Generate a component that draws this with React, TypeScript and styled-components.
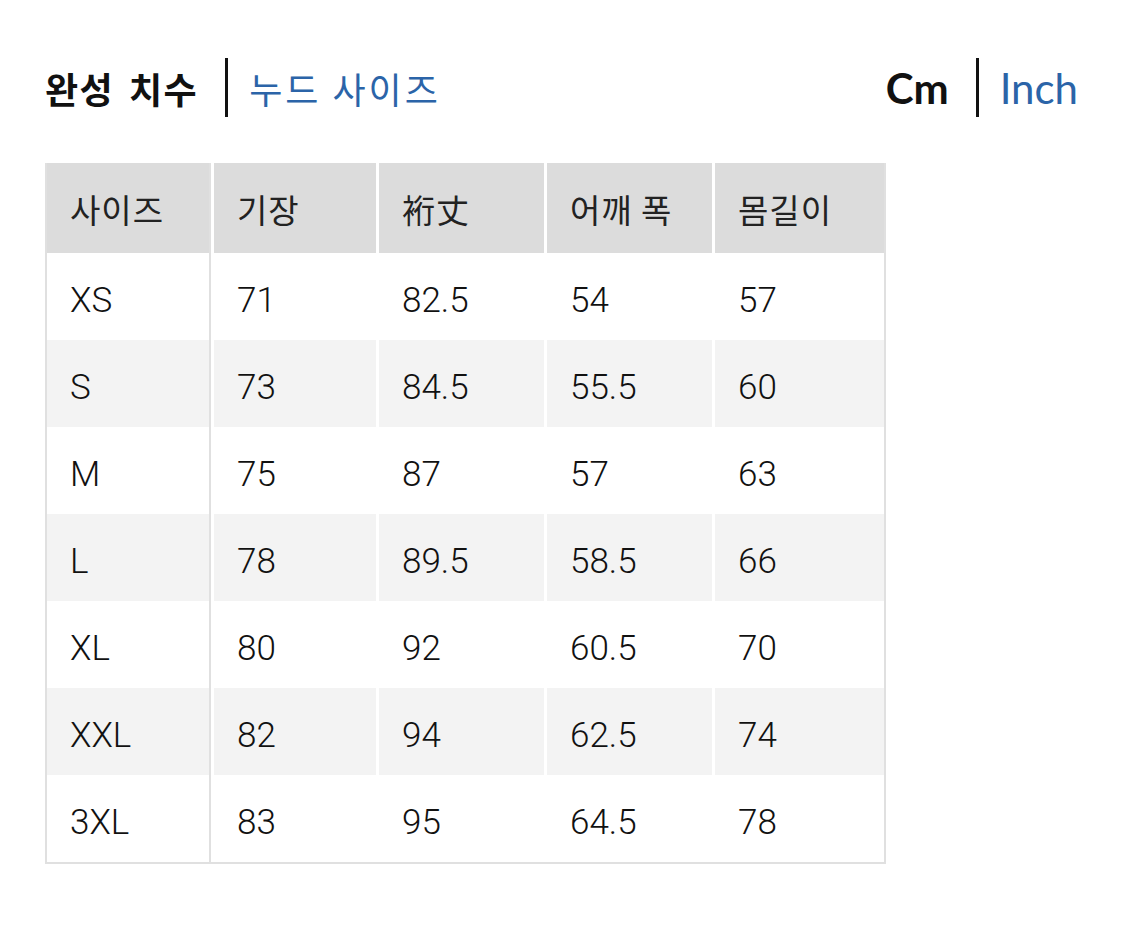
import React, { FC } from 'react';
import styled, { createGlobalStyle } from 'styled-components';

const GlobalStyle = createGlobalStyle`
    body {
        margin: 0;
        background: #fff;
        font-family: Roboto, "Noto Sans CJK KR", sans-serif;
        color: #111;
    }
`;

const Page = styled.div`
    width: 1125px;
    height: 945px;
    box-sizing: border-box;
    padding: 58px 47px 0 45px;
`;

const TopBar = styled.div`
    display: flex;
    justify-content: space-between;
    align-items: center;
    height: 59px;
`;

const Toggle = styled.div`
    display: flex;
    align-items: center;
    height: 100%;
`;

const Divider = styled.span`
    width: 3px;
    height: 59px;
    background: #111;
    margin: 0 21px 0 27px;
`;

const Tab = styled.span<{ $active?: boolean; $latin?: boolean }>`
    font-family: ${(p) =>
        p.$latin ? 'Lato, "Liberation Sans", sans-serif' : '"Noto Sans CJK KR", sans-serif'};
    font-size: ${(p) => (p.$latin ? '42px' : '36px')};
    font-weight: ${(p) => (p.$active ? 700 : 400)};
    color: ${(p) => (p.$active ? '#111' : '#2b64a8')};
    letter-spacing: ${(p) => (p.$latin ? '0' : p.$active ? '1.5px' : '3px')};
    word-spacing: ${(p) => (p.$active && !p.$latin ? '5px' : '0')};
    line-height: 1;
`;

const Table = styled.div`
    margin-top: 46px;
    width: 841px;
    border: 2px solid #e0e0e0;
    border-top: none;
    box-sizing: border-box;
`;

const Row = styled.div<{ $head?: boolean }>`
    display: grid;
    grid-template-columns: 164px 162px 165px 165px 1fr;
    column-gap: 3px;
    height: ${(p) => (p.$head ? '90px' : '87px')};
`;

const Cell = styled.div<{ $bg: string; $first?: boolean }>`
    display: flex;
    align-items: center;
    padding-left: 23px;
    padding-top: ${(p) => (p.$bg === 'head' ? '2px' : '8px')};
    background: ${(p) => (p.$bg === 'head' ? '#dcdcdc' : p.$bg === 'alt' ? '#f3f3f3' : '#fff')};
    border-right: ${(p) => (p.$first ? '2px solid #e0e0e0' : 'none')};
    font-family: Roboto, "Noto Sans CJK KR", sans-serif;
    font-weight: 300;
    font-size: 35px;
    color: #111;
`;

const HeadText = styled.span`
    font-family: "Noto Sans CJK KR", sans-serif;
    font-weight: 400;
    font-size: 33px;
    letter-spacing: 1px;
    color: #222;
`;

const headers = ['사이즈', '기장', '裄丈', '어깨 폭', '몸길이'];

const rows: string[][] = [
    ['XS', '71', '82.5', '54', '57'],
    ['S', '73', '84.5', '55.5', '60'],
    ['M', '75', '87', '57', '63'],
    ['L', '78', '89.5', '58.5', '66'],
    ['XL', '80', '92', '60.5', '70'],
    ['XXL', '82', '94', '62.5', '74'],
    ['3XL', '83', '95', '64.5', '78'],
];

const App: FC = () => {
    return (
        <Page>
            <GlobalStyle />
            <TopBar>
                <Toggle>
                    <Tab $active>완성 치수</Tab>
                    <Divider />
                    <Tab>누드 사이즈</Tab>
                </Toggle>
                <Toggle>
                    <Tab $active $latin>Cm</Tab>
                    <Divider />
                    <Tab $latin>Inch</Tab>
                </Toggle>
            </TopBar>

            <Table>
                <Row $head>
                    {headers.map((h, i) => (
                        <Cell key={h} $bg="head" $first={i === 0}>
                            <HeadText>{h}</HeadText>
                        </Cell>
                    ))}
                </Row>
                {rows.map((r, ri) => {
                    const bg = ri % 2 === 1 ? 'alt' : 'plain';
                    return (
                        <Row key={r[0]}>
                            {r.map((v, ci) => (
                                <Cell key={ci} $bg={bg} $first={ci === 0}>
                                    {v}
                                </Cell>
                            ))}
                        </Row>
                    );
                })}
            </Table>
        </Page>
    );
};

export default App;
